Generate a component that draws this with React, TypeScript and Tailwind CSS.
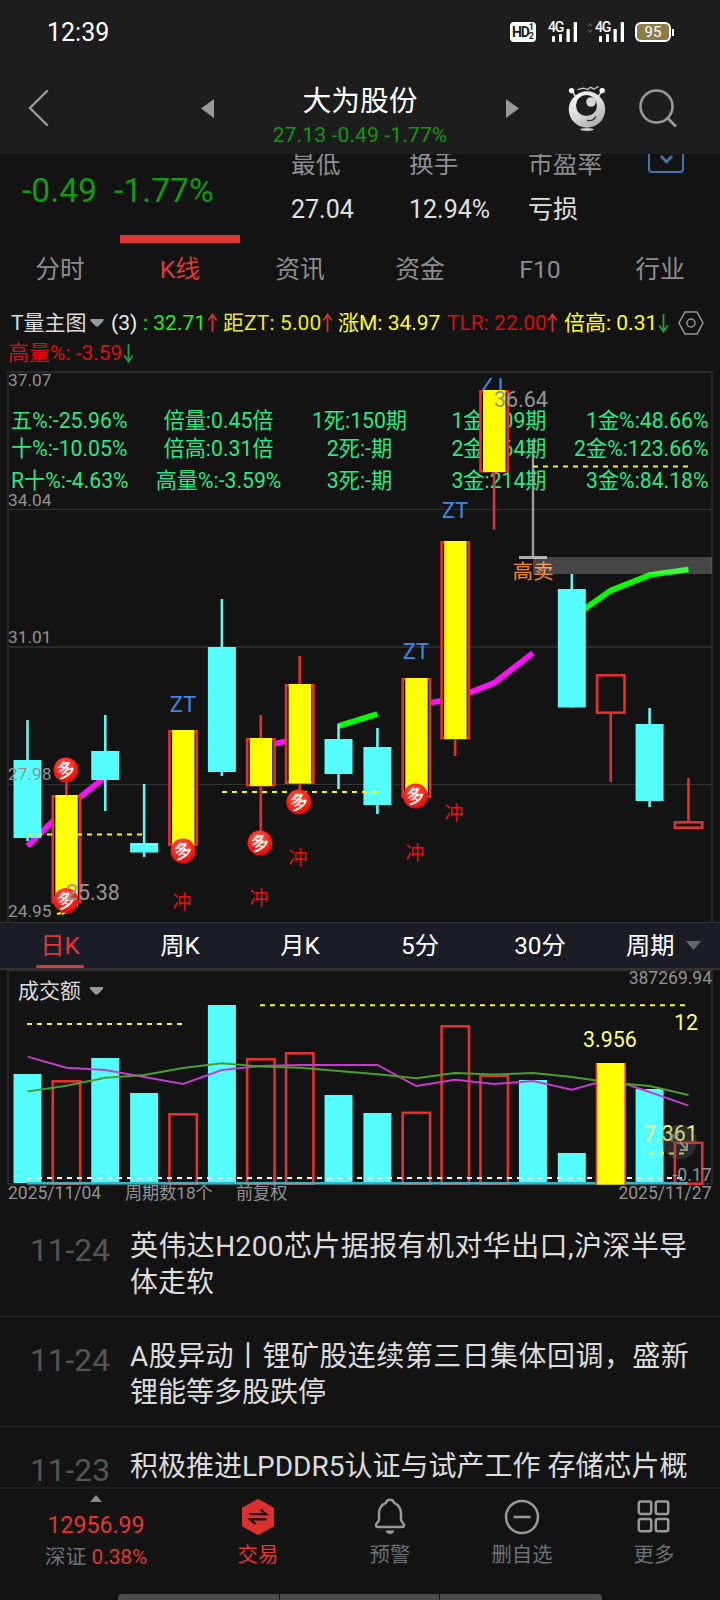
// Stock detail page: quote header, K-line chart, turnover chart, news and action bar

import type { ReactNode } from "react";

const STEP = 38.88;
const cx = (i: number) => 27.5 + i * STEP;

const CYAN = "#55ffff";
const RED = "#e03030";
const YELLOW = "#ffff00";

type CandleKind = "down" | "up" | "limit";

interface Candle {
  i: number;
  kind: CandleKind;
  high: number;
  top: number;
  bottom: number;
  low: number;
}

const candles: Candle[] = [
  { i: 0, kind: "down", high: 720, top: 760, bottom: 838, low: 841 },
  { i: 1, kind: "limit", high: 780, top: 795, bottom: 903.5, low: 903 },
  { i: 2, kind: "down", high: 715, top: 751, bottom: 780, low: 811 },
  { i: 3, kind: "down", high: 784, top: 843, bottom: 852.5, low: 857 },
  { i: 4, kind: "limit", high: 731, top: 730, bottom: 846, low: 846 },
  { i: 5, kind: "down", high: 599, top: 647, bottom: 772, low: 776 },
  { i: 6, kind: "limit", high: 715, top: 738, bottom: 786.5, low: 833 },
  { i: 7, kind: "limit", high: 656, top: 684, bottom: 784, low: 792 },
  { i: 8, kind: "down", high: 724, top: 739, bottom: 774, low: 789 },
  { i: 9, kind: "down", high: 728, top: 747, bottom: 805, low: 814 },
  { i: 10, kind: "limit", high: 679, top: 678, bottom: 798, low: 798 },
  { i: 11, kind: "limit", high: 542, top: 541, bottom: 739.5, low: 756 },
  { i: 12, kind: "limit", high: 391, top: 390, bottom: 472.5, low: 529.5 },
  { i: 14, kind: "down", high: 574, top: 589, bottom: 707.5, low: 707.5 },
  { i: 15, kind: "up", high: 675, top: 674, bottom: 714, low: 782 },
  { i: 16, kind: "down", high: 708, top: 724, bottom: 801, low: 807 },
  { i: 17, kind: "up", high: 778, top: 821, bottom: 829, low: 828 },
];

const volumes: { kind: CandleKind; top: number }[] = [
  { kind: "down", top: 1074 },
  { kind: "up", top: 1080 },
  { kind: "down", top: 1058 },
  { kind: "down", top: 1093 },
  { kind: "up", top: 1113 },
  { kind: "down", top: 1005 },
  { kind: "up", top: 1058 },
  { kind: "up", top: 1052 },
  { kind: "down", top: 1095 },
  { kind: "down", top: 1113 },
  { kind: "up", top: 1111.5 },
  { kind: "up", top: 1025 },
  { kind: "up", top: 1074.5 },
  { kind: "down", top: 1080 },
  { kind: "down", top: 1153 },
  { kind: "limit", top: 1063 },
  { kind: "down", top: 1089 },
  { kind: "up", top: 1141.5 },
];

const maShort = [
  1056.7, 1067.7, 1070, 1077, 1084, 1070, 1066, 1065, 1065, 1065, 1086, 1079.7,
  1084, 1081, 1089.7, 1079, 1092, 1105.7,
];
const maLong = [
  1091.5, 1085.7, 1077.7, 1075, 1068, 1063.3, 1066.5, 1067.7, 1071, 1074.3,
  1078.3, 1073, 1074.5, 1073, 1077, 1082.5, 1086, 1095,
];

const toPoints = (values: number[]) =>
  values.map((y, i) => `${cx(i)},${y}`).join(" ");

const bullMarks = [
  [0.99, 770],
  [0.99, 900.5],
  [4, 851],
  [5.98, 843],
  [6.98, 802],
  [9.98, 796],
];

const chongMarks = [
  [182, 908.5],
  [259, 904.5],
  [298, 864.5],
  [415, 859.5],
  [454, 819.5],
];

const stats = [
  { y: 428, cells: ["五%:-25.96%", "倍量:0.45倍", "1死:150期", "1金:109期", "1金%:48.66%"] },
  { y: 456, cells: ["十%:-10.05%", "倍高:0.31倍", "2死:-期", "2金:164期", "2金%:123.66%"] },
  { y: 488, cells: ["R十%:-4.63%", "高量%:-3.59%", "3死:-期", "3金:214期", "3金%:84.18%"] },
];
const statX = [11, 218.5, 359.5, 499, 708.5];
const statAnchor = ["start", "middle", "middle", "middle", "end"] as const;

function CaretDown({ className }: { className: string }) {
  return (
    <svg viewBox="0 0 14 8" className={className}>
      <path d="M0.5 0h13v2L8 7.6H6L0.5 2z" fill="currentColor" />
    </svg>
  );
}

function TrendArrow({ up }: { up?: boolean }) {
  return (
    <svg
      viewBox="0 0 11 20"
      className={
        up
          ? "h-5 w-[11px] shrink-0 text-[#c8372f]"
          : "h-5 w-[11px] shrink-0 rotate-180 text-[#2c9a4a]"
      }
      fill="none"
      stroke="currentColor"
      strokeWidth="1.8"
    >
      <path d="M5.5 1v18M1.2 7.5 5.5 1.5l4.3 6" />
    </svg>
  );
}

function Signal() {
  return (
    <div className="relative h-5 w-[29px]">
      <span className="absolute left-0 top-[-3px] text-[14px] font-medium leading-[16px] tracking-[-1.2px]">
        4G
      </span>
      <svg viewBox="0 0 29 20" className="h-5 w-[29px]" fill="#fff">
        <rect x="4" y="14" width="3" height="6" rx="0.8" />
        <rect x="11" y="12" width="3" height="8" rx="0.8" />
        <rect x="18.5" y="7" width="3.3" height="13" rx="0.8" />
        <rect x="25.7" y="0" width="3.3" height="20" rx="0.8" />
      </svg>
    </div>
  );
}

function StatusBar() {
  return (
    <div className="flex h-16 items-center pl-[47px] pr-[46px] text-white">
      <span className="text-[25px] leading-none">12:39</span>
      <div className="ml-auto flex items-center">
        <div className="relative h-5 w-[26px] rounded-[4px] bg-white text-[#1d1d1d]">
          <span className="absolute left-[2px] top-[1px] text-[14px] font-bold leading-[19px] tracking-[-1.2px]">
            HD
          </span>
          <span className="absolute right-[2px] top-[1px] text-[9px] font-bold leading-[9px]">
            1<br />2
          </span>
        </div>
        <div className="ml-3">
          <Signal />
        </div>
        <svg viewBox="0 0 6 10" className="mb-2 ml-[10px] mr-[2px] h-[10px] w-[6px]" fill="none" stroke="#555" strokeWidth="1.4">
          <path d="M1 3.4 3 1l2 2.4M1 6.6 3 9l2-2.4" />
        </svg>
        <Signal />
        <div className="ml-[11px] flex h-5 w-9 items-center justify-center rounded-[6px] border-2 border-white bg-[#8d7c45] text-[15px] leading-none">
          95
        </div>
        <div className="ml-[1px] h-[7px] w-[2px] bg-white" />
      </div>
    </div>
  );
}

function Mascot() {
  return (
    <svg viewBox="0 0 38 46" className="h-[46px] w-[38px]">
      <defs>
        <linearGradient id="ball" x1="0" y1="0" x2="0.6" y2="1">
          <stop offset="0" stopColor="#fff" />
          <stop offset="0.55" stopColor="#dcdcdc" />
          <stop offset="1" stopColor="#b4b4b4" />
        </linearGradient>
      </defs>
      <path d="M4 6l4 6M34 6l-4 6" stroke="#ddd" strokeWidth="1.5" />
      <circle cx="3.6" cy="5.6" r="2.7" fill="#fff" />
      <circle cx="34.2" cy="5.6" r="2.7" fill="#fff" />
      <path d="M9.5 4.6l6-1.4 4 1.3 3-2.2 3.5 1.8 4.5-2.6" stroke="#ccc" strokeWidth="1.3" fill="none" />
      <circle cx="19" cy="24.5" r="18.2" fill="url(#ball)" />
      <circle cx="18.5" cy="20.5" r="10.5" fill="#1d1d1d" />
      <circle cx="23" cy="17" r="4.8" fill="#d8d8d8" />
      <path d="M19 35.5c4 .6 7.5-.6 8.8-4.3" stroke="#333" strokeWidth="1.3" fill="none" />
      <ellipse cx="19" cy="44.5" rx="6.8" ry="1.4" fill="#ccc" />
    </svg>
  );
}

function Header() {
  return (
    <div className="flex h-[90px] items-start text-[#999]">
      <svg viewBox="0 0 22 38" className="ml-7 mt-[25px] h-[38px] w-[22px]" fill="none" stroke="currentColor" strokeWidth="2.4" strokeLinecap="round">
        <path d="M19 2 2 19l17 17" />
      </svg>
      <svg viewBox="0 0 13 19" className="ml-[151px] mt-[35px] h-[19px] w-[13px]" fill="currentColor">
        <path d="M13 0v19L0 9.5z" />
      </svg>
      <div className="flex w-[292px] flex-col items-center pt-[18px]">
        <div className="relative top-px text-[28.8px] leading-9 text-white">大为股份</div>
        <div className="mt-[5px] text-[21px] leading-6 tracking-[0.15px] text-[#179417]">
          27.13 -0.49 -1.77%
        </div>
      </div>
      <svg viewBox="0 0 13 19" className="mt-[35px] h-[19px] w-[13px]" fill="currentColor">
        <path d="M0 0v19l13-9.5z" />
      </svg>
      <div className="ml-[49px] mt-[21px]">
        <Mascot />
      </div>
      <svg viewBox="0 0 38 38" className="ml-[33px] mt-[25px] h-[38px] w-[38px]" fill="none" stroke="currentColor" strokeWidth="2.6">
        <circle cx="17.5" cy="17.5" r="16" />
        <path d="M28.5 29 37 37.5" strokeWidth="3" />
      </svg>
    </div>
  );
}

function QuoteSummary() {
  const items = [
    ["最低", "27.04", "w-[118px]"],
    ["换手", "12.94%", "w-[119px]"],
    ["市盈率", "亏损", "w-[120px]"],
  ];
  return (
    <div className="flex h-[81px] overflow-hidden">
      <div className="flex w-[291px] gap-[17px] pl-[22px] pt-[17px] text-[33.7px] leading-10 text-[#129a12]">
        <span>-0.49</span>
        <span>-1.77%</span>
      </div>
      {items.map(([label, value, width]) => (
        <div key={label} className={`${width} shrink-0`}>
          <div className="mt-[-7px] text-[24.7px] leading-9 text-[#8d8d8d]">{label}</div>
          <div className="mt-[9px] text-[25px] leading-9 text-[#e0e0e0]">{value}</div>
        </div>
      ))}
      <svg viewBox="0 0 36 36" className="mt-[-17px] h-9 w-9" fill="none" stroke="#4474ad" strokeWidth="2">
        <rect x="1" y="1" width="34" height="34" rx="3" />
        <path d="M13 19l5.5 6 5.5-6" strokeWidth="2.8" />
      </svg>
    </div>
  );
}

function MainTabs() {
  const tabs = ["分时", "K线", "资讯", "资金", "F10", "行业"];
  return (
    <div className="grid h-[69px] grid-cols-6 text-[24.8px]">
      {tabs.map((tab) => {
        const active = tab === "K线";
        return (
          <div key={tab} className="flex flex-col items-center">
            <div className={active ? "h-2 w-full bg-[#e03434]" : "h-2 w-full"} />
            <div className={active ? "mt-[9px] leading-9 text-[#e03a38]" : "mt-[9px] leading-9 text-[#8d8d8d]"}>
              {tab}
            </div>
          </div>
        );
      })}
    </div>
  );
}

function Field({ className, children }: { className: string; children: ReactNode }) {
  return <span className={`shrink-0 whitespace-nowrap ${className}`}>{children}</span>;
}

function IndicatorRow() {
  return (
    <div className="h-[64px] text-[21px] leading-[30px]">
      <div className="flex items-center pl-[11px] pt-1">
        <Field className="w-[79px] text-[#ddd]">T量主图</Field>
        <CaretDown className="h-[8px] w-[14px] text-[#999]" />
        <Field className="ml-[7px] w-8 text-[#eee]">(3)</Field>
        <Field className="w-[64px] text-[#20f020]">: 32.71</Field>
        <TrendArrow up />
        <Field className="ml-[5px] w-[99px] tracking-[0.12px] text-[#eaea34]">距ZT: 5.00</Field>
        <TrendArrow up />
        <Field className="ml-[5px] w-[109px] text-[#ffff26]">涨M: 34.97</Field>
        <Field className="w-[100px] text-[#d01010]">TLR: 22.00</Field>
        <TrendArrow up />
        <Field className="ml-[6px] w-[94px] text-[#ffff26]">倍高: 0.31</Field>
        <TrendArrow />
        <svg viewBox="0 0 26 24" className="ml-[9px] h-6 w-[26px]" fill="none" stroke="#999" strokeWidth="1.5">
          <path d="M7 1h12l6 11-6 11H7L1 12z" />
          <circle cx="13" cy="12" r="4" />
        </svg>
      </div>
      <div className="flex items-center pl-[8px]">
        <Field className="w-[115px] text-[#dc1010]">高量%: -3.59</Field>
        <TrendArrow />
      </div>
    </div>
  );
}

function Body({ x, kind, top, bottom }: { x: number; kind: CandleKind; top: number; bottom: number }) {
  if (kind === "down") {
    return <rect x={x - 14} y={top} width={28} height={bottom - top} fill={CYAN} />;
  }
  return (
    <rect x={x - 13.6} y={top + 1.3} width={27.4} height={bottom - top - 2.6} fill="#131313" stroke={RED} strokeWidth={2.6} />
  );
}

function KLineChart() {
  return (
    <svg viewBox="0 368 720 554" className="block h-[554px] w-[720px]">
      <defs>
        <radialGradient id="bull" cx="0.45" cy="0.35" r="0.65">
          <stop offset="0" stopColor="#ff6a5a" />
          <stop offset="0.6" stopColor="#f8261c" />
          <stop offset="1" stopColor="#d80c0c" />
        </radialGradient>
        <clipPath id="plot">
          <rect x="8" y="378" width="704" height="538" />
        </clipPath>
      </defs>

      {/* grid */}
      <g stroke="#2b2b2b" strokeWidth="1.5">
        <path d="M8 372h704M8 647h704" strokeWidth="2" />
        <path d="M8 509.5h704M8 784.5h704" stroke="#333" strokeWidth="1" />
        <path d="M8 371v551M712 371v551" />
      </g>

      {/* moving averages */}
      <g fill="none" strokeWidth="5.8">
        <g stroke="#f814f0">
          <path d="M27.5 846 66.4 808 105.3 777" />
          <path d="M260.8 747 299.7 738" />
          <path d="M416.3 705 455.2 698.5 494.1 683 533 653" />
        </g>
        <g stroke="#0cf80c">
          <path d="M338.5 726 377.4 714" />
          <path d="M571.8 618 610.7 590.5 649.6 575 688.5 569.5" />
        </g>
      </g>

      <text x={494} y={392} fontSize={22} textAnchor="middle" fill="#3f8ae4" clipPath="url(#plot)">
        ZT
      </text>

      {/* stats table */}
      <g fontSize={21.2} fill="#2ae882">
        {stats.map((row) =>
          row.cells.map((cell, i) => (
            <text key={cell} x={statX[i]} y={row.y} textAnchor={statAnchor[i]}>
              {cell}
            </text>
          ))
        )}
      </g>

      {/* candles */}
      {candles.map((c) => {
        const x = cx(c.i);
        const color = c.kind === "down" ? "#66f4f4" : RED;
        return (
          <g key={c.i}>
            <path d={`M${x} ${c.high}V${c.low}`} stroke={color} strokeWidth="2.6" />
            <Body x={x} kind={c.kind} top={c.top} bottom={c.bottom} />
            {c.kind === "limit" && (
              <rect x={x - 11} y={c.top} width={22.4} height={c.i === 1 ? 112 : c.bottom - c.top - 0.5} rx={1} fill={YELLOW} />
            )}
          </g>
        );
      })}
      <path d="M533 440v117" stroke="#999" strokeWidth="2.4" />
      <path d="M519 557.5h28" stroke="#aaa" strokeWidth="3" />

      <g stroke="#f4f430" strokeWidth="2" strokeDasharray="5 5">
        <path d="M27 834.5h117M222 792h155M533 466.5h156" />
      </g>

      {/* signals */}
      <g fontSize={22} textAnchor="middle" fill="#3f8ae4">
        <text x={183} y={712}>ZT</text>
        <text x={416} y={659}>ZT</text>
        <text x={455} y={518.3}>ZT</text>
      </g>
      <text x={512.5} y={579} fontSize={20.6} fill="#f8842a">
        高卖
      </text>
      <rect x={533} y={557} width={179} height={17} fill="#fff" fillOpacity={0.22} />
      <g fontSize={19} textAnchor="middle" fill="#e01414">
        {chongMarks.map(([x, y]) => (
          <text key={x} x={x} y={y}>
            冲
          </text>
        ))}
      </g>
      <path d="M57 914l4-1M62 914l4-2" stroke={YELLOW} strokeWidth="2" />
      <path d="M67 914l3-2M71 912h2" stroke="#d81818" strokeWidth="1.5" />
      {bullMarks.map(([i, y]) => (
        <g key={`${i}-${y}`}>
          <circle cx={cx(i)} cy={y} r={12.5} fill="url(#bull)" />
          <text
            x={cx(i)}
            y={y + 6.5}
            fontSize={18}
            fontWeight={500}
            textAnchor="middle"
            fill="#fff"
            transform={`rotate(-14 ${cx(i)} ${y})`}
          >
            多
          </text>
        </g>
      ))}

      {/* price scale */}
      <g fontSize={17.3} fill="#929292">
        <text x={8} y={386}>37.07</text>
        <text x={8} y={506}>34.04</text>
        <text x={8} y={643}>31.01</text>
        <text x={8} y={780}>27.98</text>
        <text x={8} y={917}>24.95</text>
      </g>
      <g fontSize={21.4} fill="#969696">
        <text x={494} y={407}>36.64</text>
        <text x={66} y={900}>25.38</text>
      </g>
    </svg>
  );
}

function PeriodTabs() {
  const periods = ["日K", "周K", "月K", "5分", "30分"];
  return (
    <div className="flex h-12 border-b-2 border-t border-[#333] bg-[#1a1d25] text-[24.3px] text-white">
      {periods.map((period) => (
        <div
          key={period}
          className={
            period === "日K"
              ? "flex w-[120px] flex-col items-center text-[#e03838]"
              : "flex w-[120px] flex-col items-center"
          }
        >
          <div className="mt-[4px] leading-[38px]">{period}</div>
          {period === "日K" && <div className="h-[3px] w-12 rounded-sm bg-[#e03a3a]" />}
        </div>
      ))}
      <div className="flex w-[120px] items-center pl-[26px]">
        <span className="relative top-px leading-none">周期</span>
        <svg viewBox="0 0 15 9" className="ml-[11px] h-[9px] w-[15px]" fill="#666">
          <path d="M0 0h15L7.5 9z" />
        </svg>
      </div>
    </div>
  );
}

function TurnoverChart() {
  return (
    <svg viewBox="0 970 720 234" className="block h-[234px] w-[720px]">
      <path d="M8 970.5h704M8 970v214M712 970v214M8 1184h704" stroke="#2b2b2b" strokeWidth="1.5" fill="none" />
      {volumes.map((v, i) => (
        <Body key={i} x={cx(i)} kind={v.kind} top={v.top} bottom={v.kind === "down" ? 1183 : 1185} />
      ))}
      <path d="M27 1183.3H688" stroke="#38b4c8" strokeWidth="2.6" />
      <g fill="none" strokeWidth="1.9">
        <polyline points={toPoints(maShort)} stroke="#c43ccc" />
        <polyline points={toPoints(maLong)} stroke="#4a9e2e" />
      </g>
      <g strokeWidth="2" strokeDasharray="5 5">
        <path d="M27 1024h156M260 1005.3h427M649 1153.5h36" stroke="#f6f630" />
        <path d="M27 1178H685" stroke="#fff" />
      </g>
      <rect x={cx(15) - 14} y={1063} width={28} height={121.5} fill={YELLOW} />
      <path d={`M${cx(15) - 14.3} 1063.5v121M${cx(15) + 14.5} 1063.5v121`} stroke="#f03c18" strokeWidth="1.3" />

      <g fontSize={21.4} fill="#ffff86">
        <text x={583} y={1047}>3.956</text>
        <text x={674} y={1030}>12</text>
        <text x={644} y={1141}>7.361</text>
      </g>

      {/* expand button */}
      <circle cx="679.5" cy="1142" r="17.5" fill="#666" fillOpacity="0.3" />
      <g fill="none" stroke="#8d8d8d" strokeWidth="2">
        <path d="M672 1142v-7h7M672 1135l5 5" opacity="0.6" />
        <path d="M687 1143v7h-7M680 1142l7 8" />
      </g>

      <g fontSize={17.5} fill="#929292">
        <text x={712} y={984} textAnchor="end">387269.94</text>
        <text x={711.5} y={1181} textAnchor="end">-0.17</text>
        <text x={8} y={1199}>2025/11/04</text>
        <text x={125} y={1199} fontSize={17.1}>周期数18个</text>
        <text x={236} y={1199} fontSize={17.1}>前复权</text>
        <text x={711.5} y={1199} textAnchor="end">2025/11/27</text>
      </g>
      <text x={18} y={997.5} fontSize={21} fill="#ddd">
        成交额
      </text>
      <path d="M90 987h13v2l-5.500 5.500h-2L90 989z" fill="#999" />
    </svg>
  );
}

const news = [
  { date: "11-24", tracking: "tracking-[0.4px]", lines: ["英伟达H200芯片据报有机对华出口,沪深半导", "体走软"] },
  { date: "11-24", tracking: "tracking-[0.45px]", lines: ["A股异动丨锂矿股连续第三日集体回调，盛新", "锂能等多股跌停"] },
  { date: "11-23", tracking: "tracking-normal", lines: ["积极推进LPDDR5认证与试产工作 存储芯片概"] },
];

function NewsList() {
  return (
    <div className="h-[283px] overflow-hidden pt-[3px]">
      {news.map((item, i) => (
        <div key={i} className="flex h-[110px] border-b border-[#262626] pt-[22px]">
          <div className="w-[130px] shrink-0 pl-[30px] pt-1 text-[31.7px] leading-9 text-[#555]">
            {item.date}
          </div>
          <div className="text-[28px] leading-9 text-[#dcdcdc]">
            {item.lines.map((line, n) => (
              <div key={line} className={n === 0 ? `whitespace-nowrap ${item.tracking}` : "whitespace-nowrap"}>
                {line}
              </div>
            ))}
          </div>
        </div>
      ))}
    </div>
  );
}

function NavItem({ label, active, children }: { label: string; active?: boolean; children: ReactNode }) {
  return (
    <div className="flex w-[132px] flex-col items-center pt-[9px]">
      <svg viewBox="0 0 36 38" className="h-[38px] w-9" fill="none" stroke="#999" strokeWidth="2.5">
        {children}
      </svg>
      <div className={active ? "mt-[5px] text-[20.4px] leading-7 text-[#e83430]" : "mt-[5px] text-[20.4px] leading-7 text-[#6c7177]"}>
        {label}
      </div>
    </div>
  );
}

function BottomNav() {
  return (
    <div className="flex h-[113px] flex-col border-t-2 border-[#1e1e1e]">
      <div className="flex h-[105px]">
        <div className="flex w-48 flex-col items-center pt-[6px]">
          <svg viewBox="0 0 12 7" className="h-[7px] w-3" fill="#888">
            <path d="M6 0l6 7H0z" />
          </svg>
          <div className="mt-[10px] text-[23.1px] leading-7 text-[#e83430]">12956.99</div>
          <div className="mt-[3px] text-[20.8px] leading-7 text-[#6c7177]">
            深证 <span className="text-[#e83430]">0.38%</span>
          </div>
        </div>
        <NavItem label="交易" active>
          <path d="M18 2.5 32.500 10.5v17L18 35.500 3.500 27.5v-17z" fill="#dc302e" stroke="#dc302e" strokeWidth="3" strokeLinejoin="round" />
          <path d="M9.500 16.200h16.500L20.500 11.500M26.500 21.300H10l5.500 4.700" stroke="#141414" strokeWidth="2.2" />
        </NavItem>
        <NavItem label="预警">
          <path
            d="M18 1.8c-2.200 0-3.600 1.200-4.200 3-4.500 2-6.800 6-6.800 11v6c0 2-3 3-3 5.200 0 1.500 1 2 2.200 2h23.600c1.200 0 2.200-.5 2.200-2 0-2.200-3-3.200-3-5.200v-6c0-5-2.300-9-6.800-11-.6-1.800-2-3-4.200-3z"
            strokeLinejoin="round"
          />
          <path d="M13.500 32.500h9c-.8 4.500-8.200 4.500-9 0z" fill="#999" stroke="none" />
        </NavItem>
        <NavItem label="删自选">
          <circle cx="18" cy="19" r="16" />
          <path d="M9.500 19h17" />
        </NavItem>
        <NavItem label="更多">
          <rect x="2.800" y="3.600" width="12.400" height="12.400" rx="2" />
          <rect x="19.800" y="3.600" width="12.400" height="12.400" rx="2" />
          <rect x="2.800" y="20.900" width="12.400" height="12.400" rx="2" />
          <rect x="19.800" y="20.900" width="12.400" height="12.400" rx="2" />
        </NavItem>
      </div>
      <div className="mx-[118px] flex h-[6px] gap-px overflow-hidden rounded-t-[4px]">
        <div className="w-[161px] bg-[#4c4c4c]" />
        <div className="w-[159px] bg-[#4c4c4c]" />
        <div className="flex-1 bg-[#4c4c4c]" />
      </div>
    </div>
  );
}

export default function App() {
  return (
    <div className="h-[1600px] w-[720px] overflow-hidden bg-[#131313] font-[Roboto,'Noto_Sans_CJK_SC',sans-serif]">
      <div className="bg-[#1d1d1d]">
        <StatusBar />
        <Header />
      </div>
      <QuoteSummary />
      <MainTabs />
      <IndicatorRow />
      <KLineChart />
      <PeriodTabs />
      <TurnoverChart />
      <NewsList />
      <BottomNav />
    </div>
  );
}
